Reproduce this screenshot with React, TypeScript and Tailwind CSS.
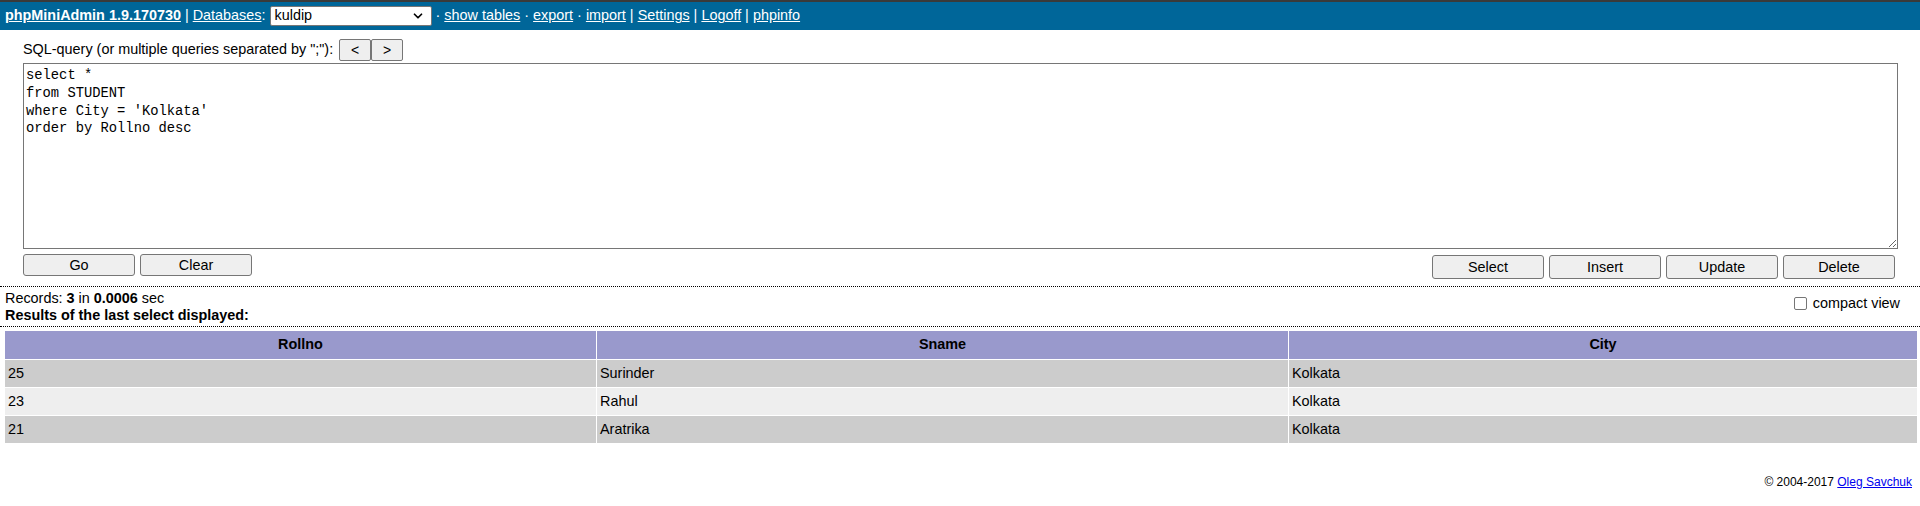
import { ChevronDown } from "lucide-react";

const rows = [
  { rollno: "25", sname: "Surinder", city: "Kolkata" },
  { rollno: "23", sname: "Rahul", city: "Kolkata" },
  { rollno: "21", sname: "Aratrika", city: "Kolkata" },
];

function Btn({ label, h = "h-[22px]" }: { label: string; h?: string }) {
  return (
    <button
      className={`w-[112px] ${h} rounded-[3px] border border-[#767676] bg-[#efefef] text-[14.4px] leading-none text-black`}
    >
      {label}
    </button>
  );
}

export default function App() {
  return (
    <div className="min-h-[506px] bg-white text-black font-['Liberation_Sans',Arial,sans-serif] text-[14.4px]">
      {/* Top bar */}
      <div className="border-t-[2px] border-[#3a3a3a] bg-[#006699] h-[30px] flex items-center px-[5px] text-white whitespace-pre">
        <a className="font-bold underline">phpMiniAdmin 1.9.170730</a>
        <span> | </span>
        <a className="underline">Databases</a>
        <span>: </span>
        <div className="w-[162px] h-[20px] bg-white border border-[#767676] rounded-[2px] flex items-center justify-between pl-[4px] pr-[6px] text-black">
          <span>kuldip</span>
          <ChevronDown size={14} strokeWidth={3} />
        </div>
        <span> · </span>
        <a className="underline">show tables</a>
        <span> · </span>
        <a className="underline">export</a>
        <span> · </span>
        <a className="underline">import</a>
        <span> | </span>
        <a className="underline">Settings</a>
        <span> | </span>
        <a className="underline">Logoff</a>
        <span> | </span>
        <a className="underline">phpinfo</a>
      </div>

      {/* Query form */}
      <div className="pl-[23px] pr-[22px] pt-[9px]">
        <div className="flex items-center gap-[4px] h-[22px]">
          <span>SQL-query (or multiple queries separated by ";"):</span>
          <div className="flex ml-[2px]">
            <button className="w-[32px] h-[22px] border border-[#767676] rounded-[2px] bg-[#efefef] text-[14px]">&lt;</button>
            <button className="w-[32px] h-[22px] border border-[#767676] rounded-[2px] bg-[#efefef] text-[14px]">&gt;</button>
          </div>
        </div>
        <textarea
          className="mt-[2px] block w-full h-[186px] border border-[#767676] px-[2px] pt-[3px] font-['Liberation_Mono',monospace] text-[13.8px] leading-[17.8px] text-black resize-y"
          defaultValue={"select *\nfrom STUDENT\nwhere City = 'Kolkata'\norder by Rollno desc"}
        />
        <div className="flex justify-between mt-[4px] mb-[7px] h-[26px]">
          <div className="flex gap-[5px] mt-[1px]">
            <Btn label="Go" />
            <Btn label="Clear" />
          </div>
          <div className="flex gap-[5px] mt-[2px] mr-[3px]">
            <Btn label="Select" h="h-[24px]" />
            <Btn label="Insert" h="h-[24px]" />
            <Btn label="Update" h="h-[24px]" />
            <Btn label="Delete" h="h-[24px]" />
          </div>
        </div>
      </div>

      {/* Result info */}
      <div className="border-t border-dotted border-black px-[5px] pt-[3px] pb-[2px] flex justify-between">
        <div className="leading-[17px]">
          <div>
            Records: <b>3</b> in <b>0.0006</b> sec
          </div>
          <div className="font-bold">Results of the last select displayed:</div>
        </div>
        <label className="flex items-center gap-[6px] mr-[15px] mt-[3px] self-start">
          <span className="w-[13px] h-[13px] border border-[#767676] rounded-[2px] bg-white" />
          <span>compact view</span>
        </label>
      </div>

      <div className="border-t border-dotted border-black pt-[3px] pl-[4px] pr-[2px]">
        <table className="w-full border-separate border-spacing-[1px] text-[14.4px]">
          <thead>
            <tr className="bg-[#9999cc]">
              <th className="h-[28px] w-[591px] font-bold">Rollno</th>
              <th className="h-[28px] w-[691px] font-bold">Sname</th>
              <th className="h-[28px] font-bold">City</th>
            </tr>
          </thead>
          <tbody>
            {rows.map((r, i) => (
              <tr key={r.rollno} className={i % 2 === 0 ? "bg-[#cccccc]" : "bg-[#eeeeee]"}>
                <td className="h-[27px] px-[3px]">{r.rollno}</td>
                <td className="h-[27px] px-[3px]">{r.sname}</td>
                <td className="h-[27px] px-[3px]">{r.city}</td>
              </tr>
            ))}
          </tbody>
        </table>
      </div>

      {/* Footer */}
      <div className="text-right text-[12px] pr-[8px] mt-[29px]">
        © 2004-2017 <a className="underline text-[#0000ee]">Oleg Savchuk</a>
      </div>
    </div>
  );
}
